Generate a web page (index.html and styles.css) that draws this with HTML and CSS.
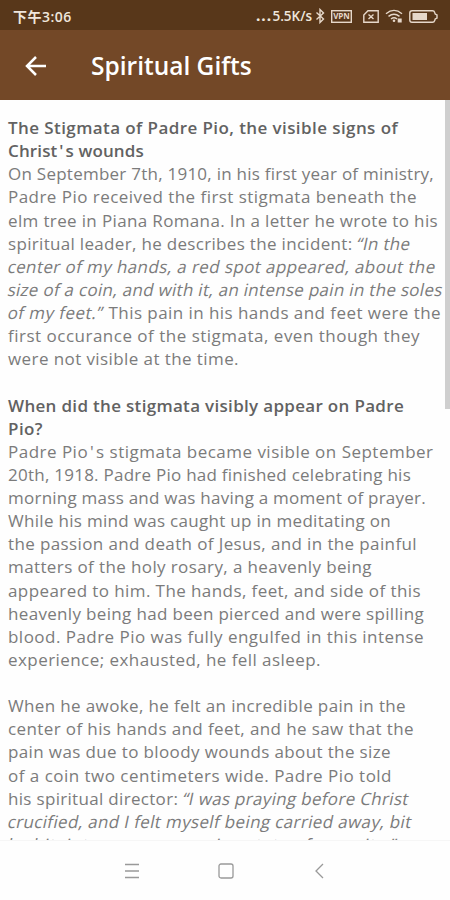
FILE: index.html
```
<!DOCTYPE html>
<html lang="en">
<head>
    <meta charset="UTF-8">
    <title>Spiritual Gifts</title>
    <meta name="viewport" content="width=device-width, initial-scale=1.0">
    <link rel="stylesheet" href="styles.css">
</head>
<body>

    <!-- Status bar -->
    <div class="status-bar">
        <span class="status-time">下午3:06</span>
        <div class="status-icons">
            <span class="net-speed"><span class="dots">...</span>5.5K/s</span>
            <svg class="icon-bt" width="10" height="16" viewBox="0 0 10 16"><path d="M1.5 4.5l7 6.5L5 14.500v-13L8.500 5l-7 6.500"/></svg>
            <svg class="icon-vpn" width="21" height="13" viewBox="0 0 21 13"><rect x=".7" y=".7" width="19.6" height="11.6"/><text x="10.5" y="9.4" text-anchor="middle">VPN</text></svg>
            <svg class="icon-sim" width="16" height="13" viewBox="0 0 16 13"><path d="M5 .8h10.200v11.400H.8V5zM5.500 4.500l5 4.500M10.500 4.500l-5 4.500"/></svg>
            <svg class="icon-wifi" width="18" height="14" viewBox="0 0 18 14"><path d="M1 4.700q8-6.600 16 0M3.500 7.400q5.500-4.400 11 0M6 10q3-2.400 6 0"/><circle cx="9" cy="11.700" r="1.300"/><rect x="12.700" y="9.500" width="4" height="4"/></svg>
            <svg class="icon-battery" width="29" height="13" viewBox="0 0 29 13"><path d="M3 .8h20.500q1.700 0 2.200 1.700l.5 1.500L28 5v3l-1.800 1-.5 1.500q-.5 1.700-2.200 1.700H3Q.8 12.200.8 10V3Q.8.8 3 .8z"/><rect x="3.500" y="3" width="14.500" height="7"/></svg>
        </div>
    </div>

    <!-- App bar -->
    <div class="app-bar">
        <svg class="back-arrow" width="22" height="20" viewBox="0 0 22 20"><path d="M11 1L2 10l9 9M2 10h19"/></svg>
        <h1>Spiritual Gifts</h1>
    </div>

    <!-- Article -->
    <div class="content">
        <h2>
            <span class="line" data-width="390">The Stigmata of Padre Pio, the visible signs of</span>
            <span class="line" data-width="136">Christ<span class="apos">'</span>s wounds</span>
        </h2>
        <p>
            <span class="line" data-width="426">On September 7th, 1910, in his first year of ministry,</span>
            <span class="line" data-width="409">Padre Pio received the first stigmata beneath the</span>
            <span class="line" data-width="430">elm tree in Piana Romana. In a letter he wrote to his</span>
            <span class="line" data-width="403">spiritual leader, he describes the incident: <em>“In the</em></span>
            <span class="line" data-width="428"><em>center of my hands, a red spot appeared, about the</em></span>
            <span class="line" data-width="435"><em>size of a coin, and with it, an intense pain in the soles</em></span>
            <span class="line" data-width="433"><em>of my feet.”</em> This pain in his hands and feet were the</span>
            <span class="line" data-width="412">first occurance of the stigmata, even though they</span>
            <span class="line" data-width="231">were not visible at the time.</span>
        </p>

        <h2>
            <span class="line" data-width="396">When did the stigmata visibly appear on Padre</span>
            <span class="line" data-width="35">Pio?</span>
        </h2>
        <p>
            <span class="line" data-width="426">Padre Pio<span class="apos">'</span>s stigmata became visible on September</span>
            <span class="line" data-width="403">20th, 1918. Padre Pio had finished celebrating his</span>
            <span class="line" data-width="418">morning mass and was having a moment of prayer.</span>
            <span class="line" data-width="383">While his mind was caught up in meditating on</span>
            <span class="line" data-width="409">the passion and death of Jesus, and in the painful</span>
            <span class="line" data-width="364">matters of the holy rosary, a heavenly being</span>
            <span class="line" data-width="413">appeared to him. The hands, feet, and side of this</span>
            <span class="line" data-width="416">heavenly being had been pierced and were spilling</span>
            <span class="line" data-width="416">blood. Padre Pio was fully engulfed in this intense</span>
            <span class="line" data-width="313">experience; exhausted, he fell asleep.</span>
        </p>

        <p>
            <span class="line" data-width="398">When he awoke, he felt an incredible pain in the</span>
            <span class="line" data-width="406">center of his hands and feet, and he saw that the</span>
            <span class="line" data-width="383">pain was due to bloody wounds about the size</span>
            <span class="line" data-width="384">of a coin two centimeters wide. Padre Pio told</span>
            <span class="line" data-width="401">his spiritual director: <em>“I was praying before Christ</em></span>
            <span class="line" data-width="404"><em>crucified, and I felt myself being carried away, bit</em></span>
            <span class="line" data-width="389"><em>by bit, into an ever growing state of serenity.”</em></span>
        </p>
        <div class="scrollbar"></div>
    </div>

    <!-- Navigation buttons -->
    <div class="nav-bar">
        <svg width="16" height="16" viewBox="0 0 16 16"><path d="M1 1.500h14M1 8h14M1 14.500h14"/></svg>
        <svg width="16" height="16" viewBox="0 0 16 16"><rect x="1" y="1" width="14" height="14" rx="2"/></svg>
        <svg width="16" height="16" viewBox="0 0 16 16"><path d="M11 1L4 8l7 7"/></svg>
    </div>

    <script>
        document.querySelectorAll('.line').forEach(function (line) {
            const extra = Number(line.dataset.width) - line.getBoundingClientRect().width;
            line.style.letterSpacing = (extra / line.textContent.length) + 'px';
        });
    </script>

</body>
</html>
```
FILE: styles.css
```
body {
    margin: 0;
    height: 900px;
    overflow: hidden;
    display: flex;
    flex-direction: column;
    background-color: #fefefe;
    font-family: "Open Sans", "Noto Sans CJK SC", sans-serif;
}

svg {
    fill: none;
    flex-shrink: 0;
}

/* Status bar */
.status-bar {
    height: 30px;
    flex-shrink: 0;
    box-sizing: border-box;
    padding: 2px 12px 0 13px;
    display: flex;
    justify-content: space-between;
    align-items: center;
    background-color: #58371a;
    color: #efe6dc;
}

.status-time {
    font-size: 14px;
    font-weight: 600;
    letter-spacing: 0.5px;
}

.status-icons {
    display: flex;
    align-items: center;
}

.net-speed {
    font-weight: 600;
    font-size: 13.500px;
}

.dots {
    font-weight: 800;
    letter-spacing: 1.500px;
}

.status-icons svg {
    stroke: #e6d8ca;
    stroke-width: 1.4;
}

.icon-bt {
    margin: 0 6px 0 3px;
}

.icon-vpn {
    margin-right: 11px;
}

.icon-vpn text {
    fill: #e6d8ca;
    stroke: none;
    font-size: 8px;
    font-weight: 700;
}

.icon-sim {
    margin-right: 6px;
}

.icon-wifi {
    margin-right: 6px;
}

.icon-wifi circle,
.icon-wifi rect,
.icon-battery rect {
    fill: #e6d8ca;
    stroke: none;
}

/* App bar */
.app-bar {
    height: 70px;
    flex-shrink: 0;
    box-sizing: border-box;
    display: flex;
    align-items: center;
    padding: 1px 0 0 25px;
    background-color: #734827;
    color: #fff;
}

.back-arrow {
    stroke: #fff;
    stroke-width: 2.500;
}

.app-bar h1 {
    margin: 0 0 0 44px;
    font-size: 24.500px;
    font-weight: 600;
    line-height: 34px;
}

/* Article */
.content {
    position: relative;
    height: 740px;
    flex-shrink: 0;
    box-sizing: border-box;
    padding: 16px 0 0 8px;
    overflow: hidden;
    white-space: nowrap;
    color: #7b7b7b;
    font-size: 17px;
    line-height: 23.130px;
}

.content h2 {
    margin: 0;
    font-size: 17px;
    font-weight: 600;
    color: #626262;
}

.content p {
    margin: 0 0 23.130px;
}

.line {
    display: table;
}

/* Slanted upright letters, no separate italic face */
.content em {
    display: inline-block;
    font-style: normal;
    transform: skewX(-12deg);
}

.apos {
    display: inline-block;
    width: 8px;
    text-align: center;
}

.scrollbar {
    position: absolute;
    top: 0;
    right: 0;
    width: 5px;
    height: 309px;
    background-color: #cfcfcf;
}

/* Navigation buttons */
.nav-bar {
    flex: 1;
    box-sizing: border-box;
    border-top: 1px solid #f6f6f6;
    display: flex;
    justify-content: center;
    align-items: center;
    gap: 78px;
    padding-left: 2px;
}

.nav-bar svg {
    stroke: #999;
    stroke-width: 1.300;
}
```
